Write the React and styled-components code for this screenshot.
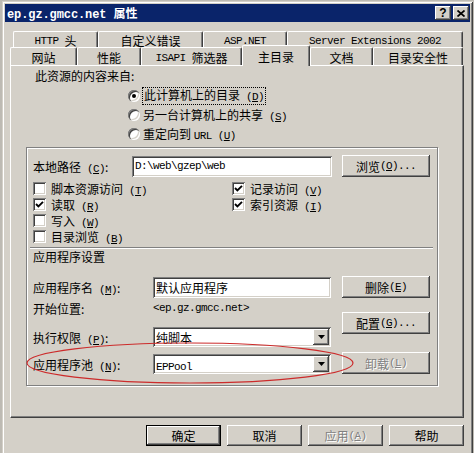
import styled, { createGlobalStyle } from 'styled-components';

const FACE = '#d4d0c8';
const raised = `box-shadow: inset -1px -1px #404040, inset 1px 1px #fff, inset -2px -2px #808080, inset 2px 2px ${FACE};`;
const sunken = `box-shadow: inset 1px 1px #808080, inset -1px -1px #fff, inset 2px 2px #404040, inset -2px -2px ${FACE};`;

const GlobalStyle = createGlobalStyle`
  html, body { margin: 0; padding: 0; }
  body {
    width: 474px;
    height: 453px;
    overflow: hidden;
    background: #bdbab3;
    font-family: "Noto Sans CJK SC", "Liberation Sans", sans-serif;
    font-size: 12px;
    color: #000;
  }
`;

const Window = styled.div`
  position: relative;
  box-sizing: border-box;
  width: 471px;
  height: 456px;
  margin: 1px 0 0 2px;
  padding: 3px;
  background: ${FACE};
  box-shadow: inset 1px 1px ${FACE}, inset -1px -1px #404040, inset 2px 2px #fff, inset -2px -2px #808080;
`;

const TitleBar = styled.div`
  height: 18px;
  background: #0a246a;
  display: flex;
  align-items: center;
  justify-content: space-between;
  padding: 0 1px 0 2px;
`;

const Title = styled.span`
  color: #fff;
  font-weight: bold;
  font-family: "Liberation Mono", "Noto Sans CJK SC", monospace;
  font-size: 12px;
  letter-spacing: -0.1px;
`;

const Captions = styled.div`
  display: flex;
  gap: 2px;
`;

const CaptionButton = styled.div`
  width: 16px;
  height: 14px;
  background: ${FACE};
  ${raised}
  display: flex;
  align-items: center;
  justify-content: center;
  font-family: "Liberation Sans", sans-serif;
  font-weight: bold;
  font-size: 12px;
  line-height: 14px;
`;

const Body = styled.div`
  padding: 9px 0 0 5px;
`;

const TabRow = styled.div`
  display: flex;
  height: ${p => p.$h}px;
  padding-left: ${p => p.$indent}px;
  align-items: flex-end;
`;

const Tab = styled.div`
  position: relative;
  z-index: ${p => (p.$active ? 3 : 1)};
  box-sizing: border-box;
  width: ${p => p.$w}px;
  height: ${p => (p.$active ? p.$h + 3 : p.$h)}px;
  margin-bottom: ${p => (p.$active ? -1 : 0)}px;
  padding-top: ${p => (p.$active ? 0 : 2)}px;
  display: flex;
  align-items: center;
  justify-content: center;
  background: ${FACE};
  border-top: 1px solid #fff;
  border-left: 1px solid #fff;
  border-right: 1px solid #404040;
  border-radius: 2px 2px 0 0;
  box-shadow: inset -1px 0 #808080;
  white-space: pre;
`;

const Panel = styled.div`
  position: relative;
  z-index: 2;
  box-sizing: border-box;
  width: 454px;
  height: 353px;
  border-style: solid;
  border-width: 1px;
  border-color: #fff #404040 #404040 #fff;
  box-shadow: inset -1px -1px #808080;
`;

const Heading = styled.div`
  height: 19px;
  line-height: 19px;
  padding-left: 24px;
`;

const RadioList = styled.div`
  margin: 1px 0 0 117px;
`;

const RadioRow = styled.div`
  height: 19px;
  display: flex;
  align-items: center;
`;

const RadioDot = styled.span`
  position: relative;
  width: 12px;
  height: 12px;
  margin-right: 3px;
  border-radius: 50%;
  background: #fff;
  box-shadow: inset 1px 1px #808080, inset 2px 2px #404040, inset -1px -1px #fff, inset -2px -2px ${FACE};
  &::after {
    content: '';
    display: ${p => (p.$on ? 'block' : 'none')};
    position: absolute;
    left: 4px;
    top: 4px;
    width: 4px;
    height: 4px;
    border-radius: 50%;
    background: #000;
  }
`;

const Focus = styled.span`
  outline: 1px dotted #000;
  outline-offset: 0;
  padding: 0 1px;
  line-height: 14px;
`;

const GroupBox = styled.div`
  box-sizing: border-box;
  width: 412px;
  height: 239px;
  margin: 4px 0 0 15px;
  padding-left: 6px;
  border: 1px solid #808080;
  box-shadow: inset 1px 1px #fff, 1px 1px #fff;
`;

const Row = styled.div`
  display: flex;
  align-items: center;
  height: ${p => p.$h}px;
  margin-top: ${p => p.$mt || 0}px;
`;

const Label = styled.span`
  width: ${p => p.$w}px;
  flex: none;
  white-space: nowrap;
`;

const Field = styled.div`
  box-sizing: border-box;
  width: ${p => p.$w}px;
  height: ${p => p.$h || 21}px;
  padding: 0 2px 0 3px;
  display: flex;
  align-items: center;
  justify-content: space-between;
  background: #fff;
  ${sunken}
  white-space: nowrap;
`;

const ComboButton = styled.span`
  width: 16px;
  height: ${p => p.$h}px;
  background: ${FACE};
  ${raised}
  display: flex;
  align-items: center;
  justify-content: center;
`;

const Button = styled.div`
  box-sizing: border-box;
  width: ${p => p.$w}px;
  height: ${p => p.$h}px;
  margin-top: ${p => p.$mt || 0}px;
  margin-left: ${p => p.$ml || 0}px;
  display: flex;
  align-items: center;
  justify-content: center;
  background: ${FACE};
  ${p => (p.$default
    ? `box-shadow: inset 0 0 0 1px #000, inset -2px -2px #404040, inset 2px 2px #fff, inset -3px -3px #808080;`
    : raised)}
  color: ${p => (p.$disabled ? '#808080' : '#000')};
  text-shadow: ${p => (p.$disabled ? '1px 1px #fff' : 'none')};
  white-space: nowrap;
`;

const Checks = styled.div`
  display: flex;
  margin-top: 3px;
`;

const CheckColumn = styled.div`
  width: ${p => p.$w}px;
`;

const CheckRow = styled.div`
  height: 16px;
  display: flex;
  align-items: center;
  gap: 5px;
`;

const CheckBox = styled.span`
  width: 13px;
  height: 13px;
  flex: none;
  background: #fff;
  ${sunken}
  display: flex;
  align-items: center;
  justify-content: center;
`;

const Separator = styled.div`
  height: 0;
  margin: 3px 4px 0 -3px;
  border-top: 1px solid #808080;
  border-bottom: 1px solid #fff;
`;

const SectionTitle = styled.div`
  height: 14px;
  line-height: 14px;
  margin-top: 1px;
`;

const AppArea = styled.div`
  display: flex;
  margin-top: 12px;
`;

const AppFields = styled.div`
  width: 298px;
`;

const AppButtons = styled.div`
  margin-left: 11px;
`;

const Footer = styled.div`
  display: flex;
  justify-content: flex-end;
  gap: 6px;
  width: 454px;
  margin-top: 7px;
`;

const Latin = styled.span`
  font-family: "Liberation Mono", monospace;
  font-size: 11px;
  letter-spacing: -0.6px;
`;

const Annotation = styled.svg`
  position: absolute;
  left: 22px;
  top: 339px;
  pointer-events: none;
  z-index: 5;
`;

const Key = ({ k }) => (
  <Latin> (<u>{k}</u>)</Latin>
);

const Check = ({ on }) => (
  <CheckBox>
    {on && (
      <svg width="9" height="9" viewBox="0 0 9 9">
        <path d="M1 4 L3.4 6.4 L8 1.8" fill="none" stroke="#000" strokeWidth="1.9" />
      </svg>
    )}
  </CheckBox>
);

const Arrow = () => (
  <svg width="7" height="4" viewBox="0 0 7 4">
    <polygon points="0,0 7,0 3.5,4" fill="#000" />
  </svg>
);

const Combo = ({ children }) => (
  <Field $w={179} $h={20}>
    <span>{children}</span>
    <ComboButton $h={16}><Arrow /></ComboButton>
  </Field>
);

const backTabs = [
  { w: 85, label: <><Latin>HTTP </Latin>头</> },
  { w: 105, label: '自定义错误' },
  { w: 84, label: <Latin>ASP.NET</Latin> },
  { w: 176, label: <Latin>Server Extensions 2002</Latin> },
];

const frontTabs = [
  { w: 67, label: '网站' },
  { w: 64, label: '性能' },
  { w: 101, label: <><Latin>ISAPI </Latin>筛选器</> },
  { w: 68, label: '主目录', active: true },
  { w: 63, label: '文档' },
  { w: 90, label: '目录安全性' },
];

const leftChecks = [
  { label: '脚本资源访问', k: 'T', on: false },
  { label: '读取', k: 'R', on: true },
  { label: '写入', k: 'W', on: false },
  { label: '目录浏览', k: 'B', on: false },
];

const rightChecks = [
  { label: '记录访问', k: 'V', on: true },
  { label: '索引资源', k: 'I', on: true },
];

export default function App() {
  return (
    <>
      <GlobalStyle />
      <Window>
        <TitleBar>
          <Title>ep.gz.gmcc.net 属性</Title>
          <Captions>
            <CaptionButton>?</CaptionButton>
            <CaptionButton>
              <svg width="8" height="7" viewBox="0 0 8 7">
                <path d="M0.5 0.5 L7.5 6.5 M7.5 0.5 L0.5 6.5" stroke="#000" strokeWidth="1.7" />
              </svg>
            </CaptionButton>
          </Captions>
        </TitleBar>

        <Body>
          <TabRow $h={16} $indent={3}>
            {backTabs.map((t, i) => (
              <Tab key={i} $w={t.w} $h={16}>{t.label}</Tab>
            ))}
          </TabRow>
          <TabRow $h={18} $indent={0}>
            {frontTabs.map((t, i) => (
              <Tab key={i} $w={t.w} $h={18} $active={t.active}>{t.label}</Tab>
            ))}
          </TabRow>

          <Panel>
            <Heading>此资源的内容来自:</Heading>
            <RadioList>
              <RadioRow>
                <RadioDot $on />
                <Focus>此计算机上的目录<Key k="D" /></Focus>
              </RadioRow>
              <RadioRow>
                <RadioDot />
                <span>另一台计算机上的共享<Key k="S" /></span>
              </RadioRow>
              <RadioRow>
                <RadioDot />
                <span>重定向到 <Latin>URL</Latin><Key k="U" /></span>
              </RadioRow>
            </RadioList>

            <GroupBox>
              <Row $h={22} $mt={7}>
                <Label $w={99}>本地路径<Key k="C" />:</Label>
                <Field $w={200}><Latin>D:\web\gzep\web</Latin></Field>
                <Button $w={88} $h={22} $ml={10}>浏览<Key k="O" /><Latin>...</Latin></Button>
              </Row>

              <Checks>
                <CheckColumn $w={199}>
                  {leftChecks.map(c => (
                    <CheckRow key={c.k}>
                      <Check on={c.on} />
                      <span>{c.label}<Key k={c.k} /></span>
                    </CheckRow>
                  ))}
                </CheckColumn>
                <CheckColumn $w={150}>
                  {rightChecks.map(c => (
                    <CheckRow key={c.k}>
                      <Check on={c.on} />
                      <span>{c.label}<Key k={c.k} /></span>
                    </CheckRow>
                  ))}
                </CheckColumn>
              </Checks>

              <Separator />
              <SectionTitle>应用程序设置</SectionTitle>

              <AppArea>
                <AppFields>
                  <Row $h={22}>
                    <Label $w={120}>应用程序名<Key k="M" />:</Label>
                    <Field $w={179}>默认应用程序</Field>
                  </Row>
                  <Row $h={20}>
                    <Label $w={120}>开始位置:</Label>
                    <Latin>&lt;ep.gz.gmcc.net&gt;</Latin>
                  </Row>
                  <Row $h={20} $mt={9}>
                    <Label $w={120}>执行权限<Key k="P" />:</Label>
                    <Combo>纯脚本</Combo>
                  </Row>
                  <Row $h={20} $mt={7}>
                    <Label $w={120}>应用程序池<Key k="N" />:</Label>
                    <Combo><Latin>EPPool</Latin></Combo>
                  </Row>
                </AppFields>
                <AppButtons>
                  <Button $w={88} $h={22}>删除<Key k="E" /></Button>
                  <Button $w={88} $h={22} $mt={14}>配置<Key k="G" /><Latin>...</Latin></Button>
                  <Button $w={88} $h={22} $mt={18} $disabled>卸载<Key k="L" /></Button>
                </AppButtons>
              </AppArea>
            </GroupBox>
          </Panel>

          <Footer>
            <Button $w={75} $h={21} $default>确定</Button>
            <Button $w={75} $h={21}>取消</Button>
            <Button $w={75} $h={21} $disabled>应用<Key k="A" /></Button>
            <Button $w={75} $h={21}>帮助</Button>
          </Footer>
        </Body>

        <Annotation width="334" height="46" viewBox="0 0 334 46">
          <ellipse cx="166" cy="23" rx="163" ry="20" fill="none" stroke="#cc2b2b" strokeWidth="1.2" />
        </Annotation>
      </Window>
    </>
  );
}
